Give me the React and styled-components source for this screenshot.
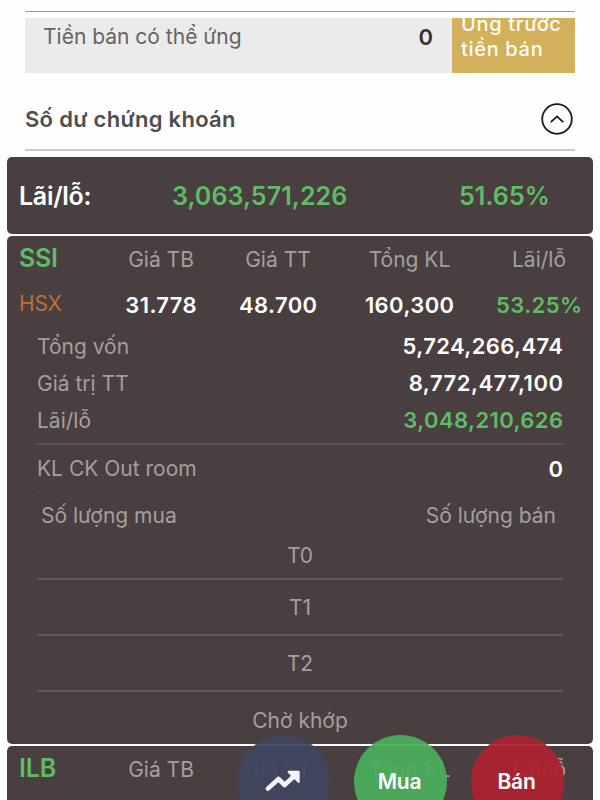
import React from 'react';
import styled, { createGlobalStyle } from 'styled-components';

const Global = createGlobalStyle`
  * { box-sizing: border-box; }
  body { margin: 0; background: #fefefe; overflow: hidden; }
`;

const Screen = styled.main`
  position: relative;
  width: 600px;
  height: 800px;
  overflow: hidden;
  font-family: Inter, "Noto Sans", sans-serif;
  font-size: 21px;
  color: #a49f9f;
  white-space: nowrap;
`;

const Account = styled.section`
  height: 151px;
  margin: 0 25px;
  padding-top: 11px;
  border-bottom: 2px solid #cbcaca;
`;

const AdvanceRow = styled.div`
  display: flex;
  height: 62px;
  padding-top: 6px;
  border-top: 1px solid #979494;
`;

const AdvanceInfo = styled.div`
  flex: 1;
  display: flex;
  justify-content: space-between;
  padding: 0 19px 0 18px;
  line-height: 38px;
  background: #ebebeb;
  color: #666364;
`;

const AdvanceLabel = styled.span`
  font-size: 21px;
`;

const AdvanceAmount = styled.span`
  font-size: 22px;
  font-weight: 600;
  color: #333;
`;

const AdvanceButton = styled.button`
  width: 123px;
  display: flex;
  align-items: flex-start;
  overflow: hidden;
  border: 0;
  padding: 0 0 0 9px;
  background: #d2b05c;
  color: #fffdf2;
  font: 500 20px/25px Inter, "Noto Sans", sans-serif;
  letter-spacing: 0.68px;
  text-align: left;
`;

const ButtonCaption = styled.span`
  margin-top: -6px;
`;

const SectionHeader = styled.header`
  display: flex;
  align-items: center;
  justify-content: space-between;
  height: 76px;
  padding: 16px 2px 0 0;
`;

const SectionTitle = styled.h2`
  margin: 0;
  font-size: 22px;
  font-weight: 600;
  line-height: 30px;
  letter-spacing: 0.3px;
  color: #504d4e;
`;

const Holdings = styled.section`
  display: flex;
  flex-direction: column;
  gap: 2px;
  padding: 6px 7px 0;
`;

const Card = styled.article`
  height: ${(p) => p.$height}px;
  flex: none;
  border-radius: 5px;
  background: #493f40;
  overflow: hidden;
`;

const Summary = styled(Card)`
  display: flex;
  align-items: center;
  padding: 1px 0 0 12px;
  font-size: 25px;
  font-weight: 600;
  letter-spacing: 0.1px;
  color: #5fbb66;
`;

const SummaryLabel = styled.span`
  width: 153px;
  color: #fff;
  letter-spacing: -0.3px;
`;

const SummaryAmount = styled.span`
  width: 287px;
`;

const QuoteGrid = styled.div`
  display: grid;
  grid-template-columns: 83px 118px 116px 147px 112px;
  grid-template-rows: 46px 46px;
  padding-left: 12px;
  text-align: center;
  line-height: 47px;
  height: 92px;
`;

const Ticker = styled.strong`
  font-size: 25px;
  font-weight: 600;
  line-height: 45px;
  letter-spacing: -0.2px;
  text-align: left;
  color: #5fbb66;
`;

const Exchange = styled.span`
  line-height: 43px;
  letter-spacing: -0.2px;
  text-align: left;
  color: #bd7138;
`;

const Heading = styled.span`
  letter-spacing: 0;
`;

const Value = styled.span`
  font-size: 22px;
  font-weight: 600;
  color: ${(p) => (p.$gain ? '#5fbb66' : '#fff')};
  letter-spacing: ${(p) => p.$spacing ?? 0.4}px;
  margin-right: -${(p) => p.$spacing ?? 0.4}px;
`;

const Details = styled.div`
  margin: 0 30px;
`;

const DetailRow = styled.div`
  display: flex;
  align-items: center;
  justify-content: space-between;
  height: ${(p) => p.$height}px;
  padding: ${(p) => p.$padding || '0'};
  border-bottom: ${(p) => (p.$line ? `${p.$lineWidth || 2}px solid ${p.$line}` : '0')};
`;

const Term = styled.div`
  display: flex;
  align-items: center;
  justify-content: center;
  height: ${(p) => p.$height}px;
  padding: ${(p) => p.$padding || '0'};
  border-bottom: ${(p) => (p.$last ? '0' : '2px solid #625859')};
`;

const Actions = styled.nav`
  position: absolute;
  top: 735px;
  left: 237px;
  display: flex;
  gap: 24px;
`;

const RoundButton = styled.button`
  width: 93px;
  height: 93px;
  display: grid;
  place-items: center;
  border: 0;
  padding: 0 2px 0 0;
  border-radius: 50%;
  background: ${(p) => p.$color};
  color: #fff;
  font: 600 21px/30px Inter, "Noto Sans", sans-serif;
  letter-spacing: -0.2px;
`;

const ActionIcon = styled.svg`
  display: block;
`;

function Quote({ symbol, exchange, values }) {
  return (
    <QuoteGrid>
      <Ticker>{symbol}</Ticker>
      <Heading>Giá TB</Heading>
      <Heading>Giá TT</Heading>
      <Heading>Tổng KL</Heading>
      <Heading>Lãi/lỗ</Heading>
      {exchange && <Exchange>{exchange}</Exchange>}
      {values?.map((v, i) => (
        <Value key={v} $gain={i === 3}>{v}</Value>
      ))}
    </QuoteGrid>
  );
}

export default function App() {
  return (
    <Screen>
      <Global />
      <Account>
        <AdvanceRow>
          <AdvanceInfo>
            <AdvanceLabel>Tiền bán có thể ứng</AdvanceLabel>
            <AdvanceAmount>0</AdvanceAmount>
          </AdvanceInfo>
          <AdvanceButton>
            <ButtonCaption>Ứng trước<br />tiền bán</ButtonCaption>
          </AdvanceButton>
        </AdvanceRow>
        <SectionHeader>
          <SectionTitle>Số dư chứng khoán</SectionTitle>
          <svg width="32" height="32" viewBox="0 0 32 32" fill="none" stroke="#1c1a1b" strokeWidth="1.8">
            <circle cx="16" cy="16" r="14.8" />
            <path d="M9.8 19.2 16 13.4l6.2 5.8" />
          </svg>
        </SectionHeader>
      </Account>

      <Holdings>
        <Summary $height={77}>
          <SummaryLabel>Lãi/lỗ:</SummaryLabel>
          <SummaryAmount>3,063,571,226</SummaryAmount>
          <span>51.65%</span>
        </Summary>

        <Card $height={508}>
          <Quote symbol="SSI" exchange="HSX" values={['31.778', '48.700', '160,300', '53.25%']} />
          <Details>
            <DetailRow $height={36}><span>Tổng vốn</span><Value>5,724,266,474</Value></DetailRow>
            <DetailRow $height={38}><span>Giá trị TT</span><Value $spacing={0.55}>8,772,477,100</Value></DetailRow>
            <DetailRow $height={43} $padding="0 0 5px" $line="#5b5152"><span>Lãi/lỗ</span><Value $gain>3,048,210,626</Value></DetailRow>
            <DetailRow $height={48} $line="#504647" $lineWidth={1}><span>KL CK Out room</span><Value>0</Value></DetailRow>
            <DetailRow $height={44} $padding="0 7px 0 4px"><span>Số lượng mua</span><span>Số lượng bán</span></DetailRow>
            <Term $height={43} $padding="0 0 4px">T0</Term>
            <Term $height={56}>T1</Term>
            <Term $height={56}>T2</Term>
            <Term $height={53} $padding="4px 0 0" $last>Chờ khớp</Term>
          </Details>
        </Card>

        <Card $height={100}>
          <Quote symbol="ILB" />
        </Card>
      </Holdings>

      <Actions>
        <RoundButton $color="rgba(64, 70, 94, 0.94)">
          <ActionIcon width="37" height="29" viewBox="0 0 37 29">
            <path d="M3.9 21.6 14.5 12l6 6L30 9.2" fill="none" stroke="#f3f2f8" strokeWidth="4.6" strokeLinecap="round" strokeLinejoin="round" />
            <path d="M24.5 4.8h10.2v10.2z" fill="#f3f2f8" stroke="#f3f2f8" strokeWidth="2" strokeLinejoin="round" />
          </ActionIcon>
        </RoundButton>
        <RoundButton $color="rgba(74, 174, 91, 0.94)">Mua</RoundButton>
        <RoundButton $color="rgba(172, 35, 49, 0.94)">Bán</RoundButton>
      </Actions>
    </Screen>
  );
}
